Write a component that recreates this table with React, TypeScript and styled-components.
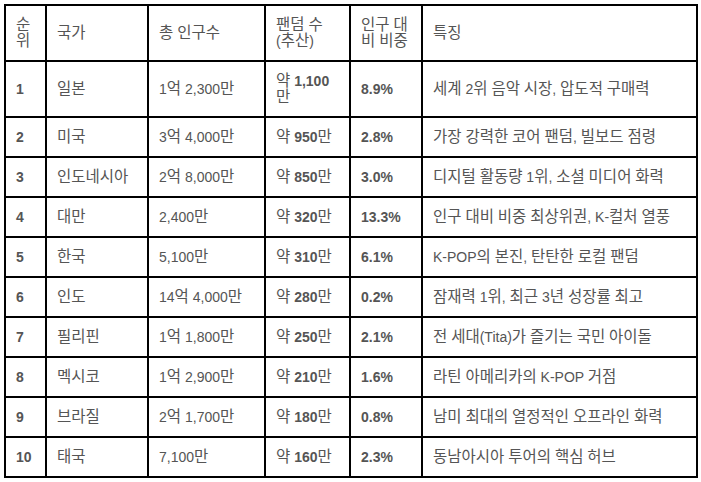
import React from "react"
import styled, { createGlobalStyle } from "styled-components"

const GlobalStyle = createGlobalStyle`
  html, body {
    margin: 0;
    padding: 0;
    background: #fff;
  }
  body {
    font-family: "Liberation Sans", Arial, "Noto Sans CJK KR", sans-serif;
    font-size: 14px;
    color: #555;
  }
`

const Page = styled.div`
  padding: 4px 0 0 4px;
`

const Table = styled.table`
  width: 694px;
  table-layout: fixed;
  border-collapse: separate;
  border-spacing: 0;
  border-top: 2px solid #000;
  border-left: 2px solid #000;
`

const Cell = styled.td<{ $bold?: boolean }>`
  box-sizing: border-box;
  padding: 11px 10px;
  border-right: 2px solid #000;
  border-bottom: 2px solid #000;
  line-height: 16px;
  vertical-align: middle;
  text-align: left;
  font-weight: ${(p) => (p.$bold ? 700 : 400)};
  color: #555;
`

const HeadCell = styled(Cell).attrs({ as: "th" })`
  font-weight: 400;
`

// korean glyphs in the shot are drawn a bit larger than the latin ones;
// small line-height so they don't grow the line box
const Hangul = styled.span`
  font-family: "Noto Sans CJK KR", sans-serif;
  font-size: 15.5px;
  font-weight: 400;
  line-height: 10px;
`

const Num = styled.b`
  font-weight: 700;
`

const ko = (text: string) =>
  text.split(/([\uAC00-\uD7A3\u3131-\u318E]+)/).map((part, i) =>
    /[\uAC00-\uD7A3\u3131-\u318E]/.test(part) ? <Hangul key={i}>{part}</Hangul> : part
  )

const widths = [41, 102, 117, 85, 72, 275]
const headers = ["순위", "국가", "총 인구수", "팬덤 수 (추산)", "인구 대비 비중", "특징"]

type Row = {
  rank: number
  country: string
  population: string
  fans: string
  ratio: string
  note: string
}

const rows: Row[] = [
  { rank: 1, country: "일본", population: "1억 2,300만", fans: "1,100", ratio: "8.9%", note: "세계 2위 음악 시장, 압도적 구매력" },
  { rank: 2, country: "미국", population: "3억 4,000만", fans: "950", ratio: "2.8%", note: "가장 강력한 코어 팬덤, 빌보드 점령" },
  { rank: 3, country: "인도네시아", population: "2억 8,000만", fans: "850", ratio: "3.0%", note: "디지털 활동량 1위, 소셜 미디어 화력" },
  { rank: 4, country: "대만", population: "2,400만", fans: "320", ratio: "13.3%", note: "인구 대비 비중 최상위권, K-컬처 열풍" },
  { rank: 5, country: "한국", population: "5,100만", fans: "310", ratio: "6.1%", note: "K-POP의 본진, 탄탄한 로컬 팬덤" },
  { rank: 6, country: "인도", population: "14억 4,000만", fans: "280", ratio: "0.2%", note: "잠재력 1위, 최근 3년 성장률 최고" },
  { rank: 7, country: "필리핀", population: "1억 1,800만", fans: "250", ratio: "2.1%", note: "전 세대(Tita)가 즐기는 국민 아이돌" },
  { rank: 8, country: "멕시코", population: "1억 2,900만", fans: "210", ratio: "1.6%", note: "라틴 아메리카의 K-POP 거점" },
  { rank: 9, country: "브라질", population: "2억 1,700만", fans: "180", ratio: "0.8%", note: "남미 최대의 열정적인 오프라인 화력" },
  { rank: 10, country: "태국", population: "7,100만", fans: "160", ratio: "2.3%", note: "동남아시아 투어의 핵심 허브" },
]

export default function App() {
  return (
    <>
      <GlobalStyle />
      <Page>
        <Table>
          <colgroup>
            {widths.map((w, i) => (
              <col key={i} style={{ width: w }} />
            ))}
          </colgroup>
          <thead>
            <tr>
              {headers.map((h) => (
                <HeadCell key={h}>{ko(h)}</HeadCell>
              ))}
            </tr>
          </thead>
          <tbody>
            {rows.map((r) => (
              <tr key={r.rank}>
                <Cell $bold>{r.rank}</Cell>
                <Cell>{ko(r.country)}</Cell>
                <Cell>{ko(r.population)}</Cell>
                <Cell>
                  <Hangul>약</Hangul> <Num>{r.fans}</Num>
                  <Hangul>만</Hangul>
                </Cell>
                <Cell $bold>{r.ratio}</Cell>
                <Cell>{ko(r.note)}</Cell>
              </tr>
            ))}
          </tbody>
        </Table>
      </Page>
    </>
  )
}
